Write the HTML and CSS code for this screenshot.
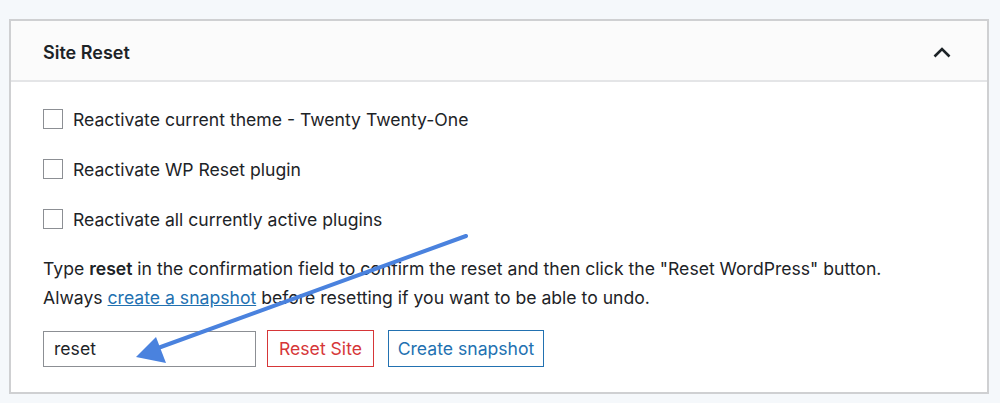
FILE: index.html
```html
<!DOCTYPE html>
<html lang="en">
<head>
<meta charset="utf-8">
<title>Site Reset</title>
<link rel="stylesheet" href="styles.css">
</head>
<body>
<div class="card">
  <div class="card-head">
    <h2 class="card-title">Site Reset</h2>
    <svg class="chevron" width="18" height="11" viewBox="0 0 18 11"><path d="M1.5 9.5 L9 2 L16.5 9.5" fill="none" stroke="#1d2327" stroke-width="2.6"/></svg>
  </div>
  <div class="card-body">
    <label class="option"><span class="check"></span><span>Reactivate current theme - Twenty Twenty-One</span></label>
    <label class="option"><span class="check"></span><span>Reactivate WP Reset plugin</span></label>
    <label class="option"><span class="check"></span><span>Reactivate all currently active plugins</span></label>
    <p class="note">Type <b>reset</b> in the confirmation field to confirm the reset and then click the "Reset WordPress" button.<br>Always <a href="#">create a snapshot</a> before resetting if you want to be able to undo.</p>
    <div class="actions">
      <div class="field">reset</div>
      <button class="btn btn-danger">Reset Site</button>
      <button class="btn btn-primary">Create snapshot</button>
    </div>
  </div>
</div>
<svg class="arrow" width="1000" height="403" viewBox="0 0 1000 403">
  <line x1="466" y1="236" x2="158" y2="348" stroke="#4a82de" stroke-width="4" stroke-linecap="round"/>
  <polygon points="136,357 156,337 166,363" fill="#4a82de"/>
</svg>
</body>
</html>
```
FILE: styles.css
```css
html, body {
  margin: 0;
  padding: 0;
}
body {
  background: #f5f8fb;
  font-family: Inter, "Noto Sans", "Liberation Sans", sans-serif;
  color: #1d2327;
  width: 1000px;
  height: 403px;
  overflow: hidden;
  position: relative;
}
.card {
  margin: 19px 0 0 9px;
  width: 980px;
  box-sizing: border-box;
  border: 2px solid #cfd0d2;
  background: #fff;
}
.card-head {
  height: 61px;
  box-sizing: border-box;
  display: flex;
  align-items: center;
  justify-content: space-between;
  padding: 3px 36px 0 32px;
  border-bottom: 2px solid #e4e5e7;
  background: #fbfbfb;
}
.card-title {
  margin: 0;
  font-size: 18px;
  font-weight: 600;
}
.chevron {
  display: block;
}
.card-body {
  padding: 27px 32px 25px 32px;
}
.option {
  display: flex;
  align-items: center;
  gap: 10px;
  height: 20px;
  margin-bottom: 30px;
  font-size: 17.6px;
}
.option:nth-of-type(3) {
  margin-bottom: 25px;
}
.check {
  width: 20px;
  height: 20px;
  box-sizing: border-box;
  border: 1.5px solid #8c8f94;
  background: #fff;
  flex: none;
}
.note {
  margin: 0 0 18px;
  font-size: 17.6px;
  line-height: 29px;
  white-space: nowrap;
}
.note b {
  font-weight: 600;
}
.note a {
  color: #2271b1;
  text-decoration: underline;
}
.actions {
  display: flex;
  align-items: center;
  gap: 11px;
}
.field {
  width: 213px;
  height: 36px;
  box-sizing: border-box;
  border: 1.5px solid #8c8f94;
  padding: 0 10px;
  display: flex;
  align-items: center;
  font-size: 17.6px;
}
.btn {
  height: 37px;
  box-sizing: border-box;
  background: #fff;
  font-family: inherit;
  font-size: 17.6px;
  padding: 0;
  white-space: nowrap;
  border: 1.5px solid;
}
.btn-danger {
  width: 107px;
  color: #d63638;
  border-color: #d63638;
}
.btn-primary {
  width: 156px;
  margin-left: 3px;
  color: #2271b1;
  border-color: #2271b1;
}
.arrow {
  position: absolute;
  left: 0;
  top: 0;
  pointer-events: none;
}
```
